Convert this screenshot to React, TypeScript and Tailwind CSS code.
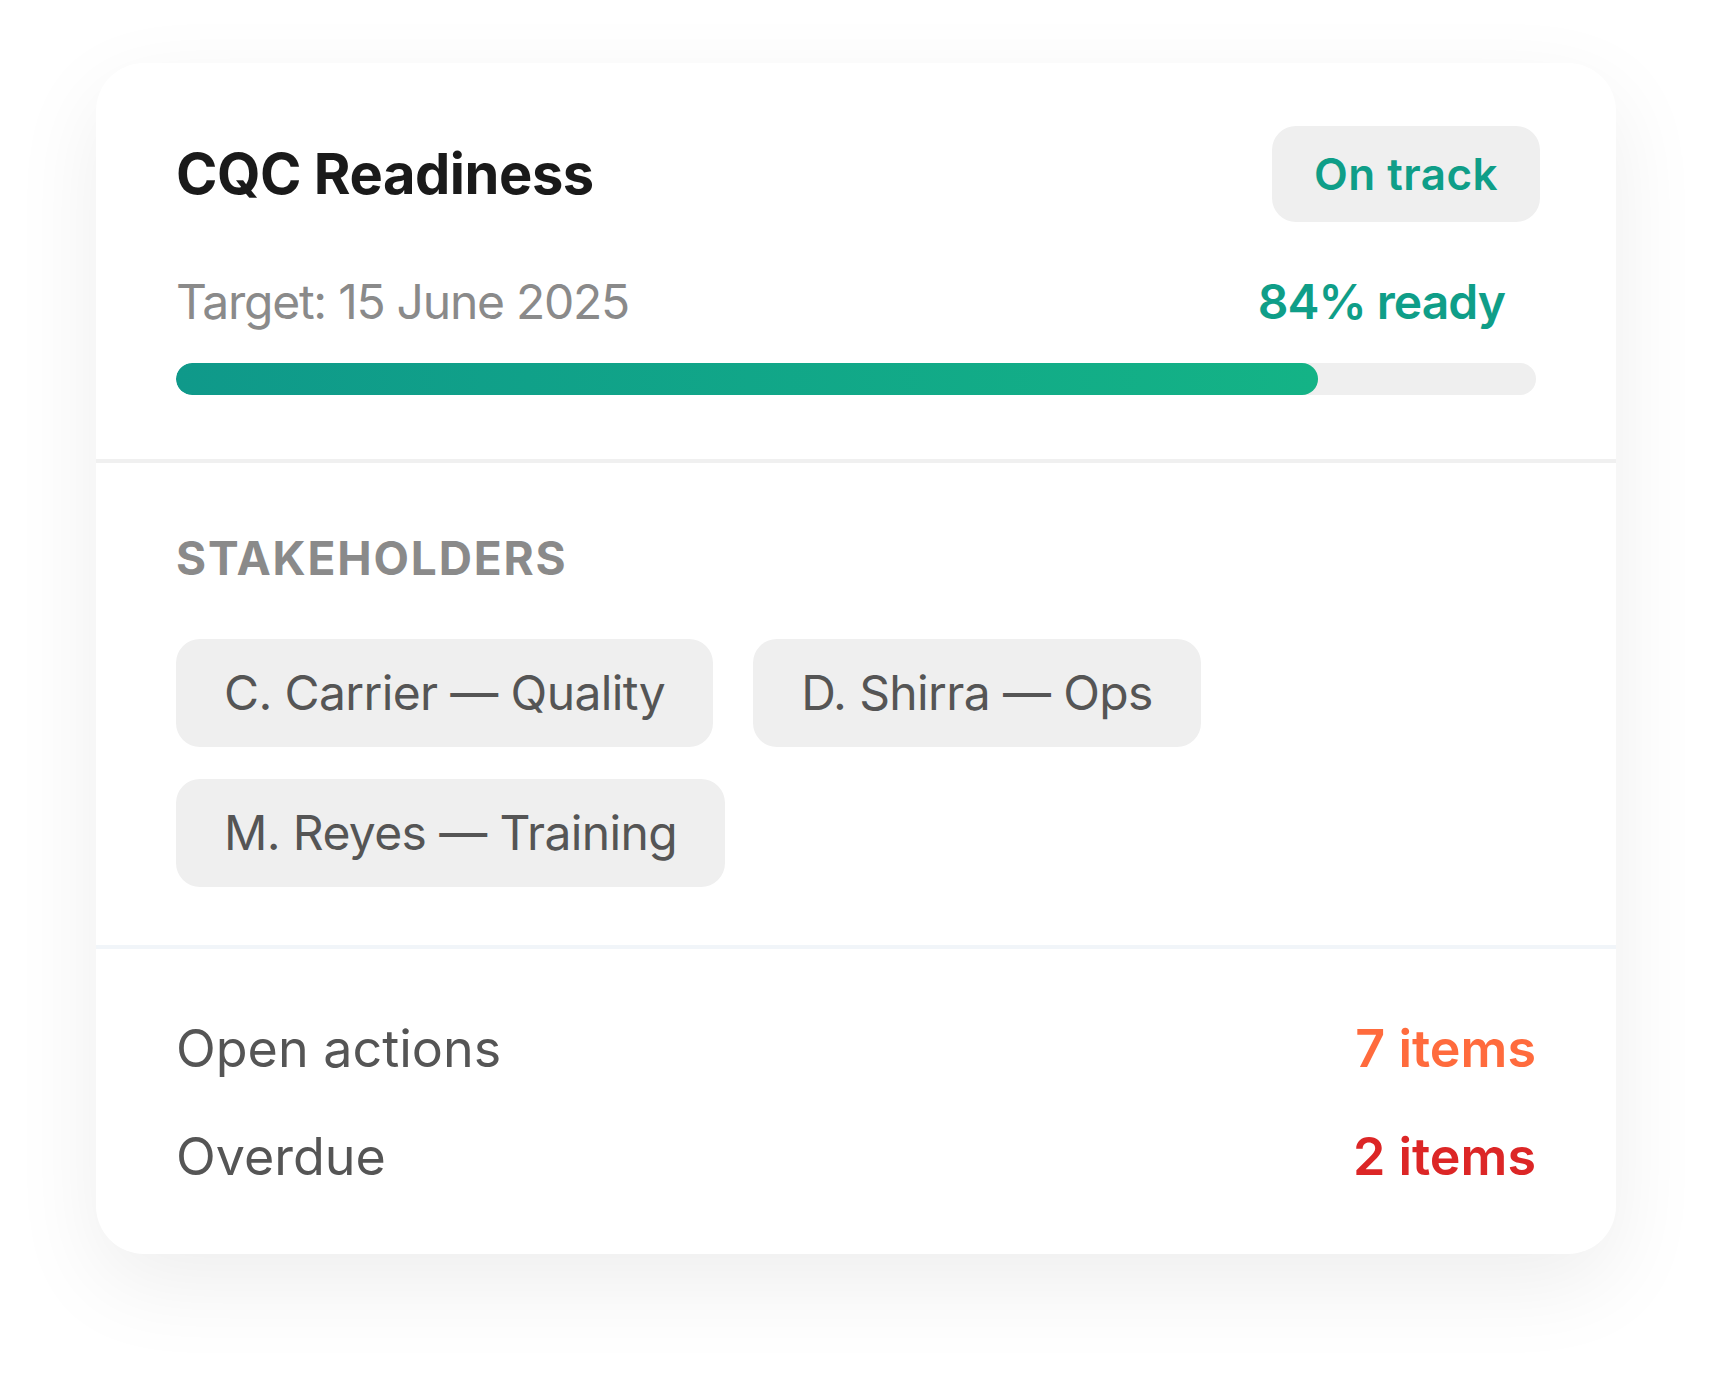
const stakeholders = ["C. Carrier — Quality", "D. Shirra — Ops", "M. Reyes — Training"];

const App = () => {
  return (
    <div className="min-h-screen bg-white px-[96px] pt-[63px] pb-[129px] font-['Inter','Liberation_Sans',sans-serif]">
      <div className="w-[1520px] rounded-[48px] bg-white shadow-[0_30px_90px_rgba(0,0,0,0.07)]">
        {/* header + progress */}
        <div className="px-[80px] pt-[63px] pb-[64px] border-b-[4px] border-[#f0f0f0]">
          <div className="flex items-center justify-between h-[96px]">
            <h1 className="text-[56px] leading-[68px] font-bold text-[#1a1a1a] tracking-[-0.008em]">CQC Readiness</h1>
            <span className="-mr-[4px] rounded-[24px] bg-[#efefef] px-[42px] py-[24px] text-[44px] leading-[48px] font-semibold text-[#0f9e88] tracking-[0.01em]">
              On track
            </span>
          </div>
          <div className="mt-[50px] flex items-baseline justify-between">
            <span className="text-[48px] leading-[60px] text-[#8a8a8a] tracking-[-0.026em]">Target: 15 June 2025</span>
            <span className="mr-[31px] text-[48px] leading-[60px] font-semibold text-[#0f9e88] tracking-[-0.02em]">84% ready</span>
          </div>
          <div className="mt-[31px] h-[32px] w-full rounded-full bg-[#efefef] overflow-hidden">
            <div className="h-full w-[84%] rounded-full bg-gradient-to-r from-[#0f998a] to-[#14b386]" />
          </div>
        </div>

        {/* stakeholders */}
        <div className="px-[80px] pt-[65px] pb-[58px] border-b-[4px] border-[#f1f5f9]">
          <div className="text-[46px] leading-[60px] font-bold tracking-[0.04em] text-[#8a8a8a]">STAKEHOLDERS</div>
          <div className="mt-[51px] flex flex-wrap gap-x-[40px] gap-y-[32px] w-[1100px]">
            {stakeholders.map((s) => (
              <span key={s} className="rounded-[24px] bg-[#efefef] px-[48px] py-[18px] text-[48px] leading-[72px] text-[#555555] tracking-[-0.013em]">
                {s}
              </span>
            ))}
          </div>
        </div>

        {/* counts */}
        <div className="px-[80px] pt-[64px] pb-[61px] flex flex-col gap-[36px]">
          <div className="flex items-baseline justify-between">
            <span className="text-[52px] leading-[72px] text-[#555555]">Open actions</span>
            <span className="text-[52px] leading-[72px] font-semibold text-[#ff6b3d]">7 items</span>
          </div>
          <div className="flex items-baseline justify-between">
            <span className="text-[52px] leading-[72px] text-[#555555]">Overdue</span>
            <span className="text-[52px] leading-[72px] font-semibold text-[#dc2626]">2 items</span>
          </div>
        </div>
      </div>
    </div>
  );
};

export default App;
